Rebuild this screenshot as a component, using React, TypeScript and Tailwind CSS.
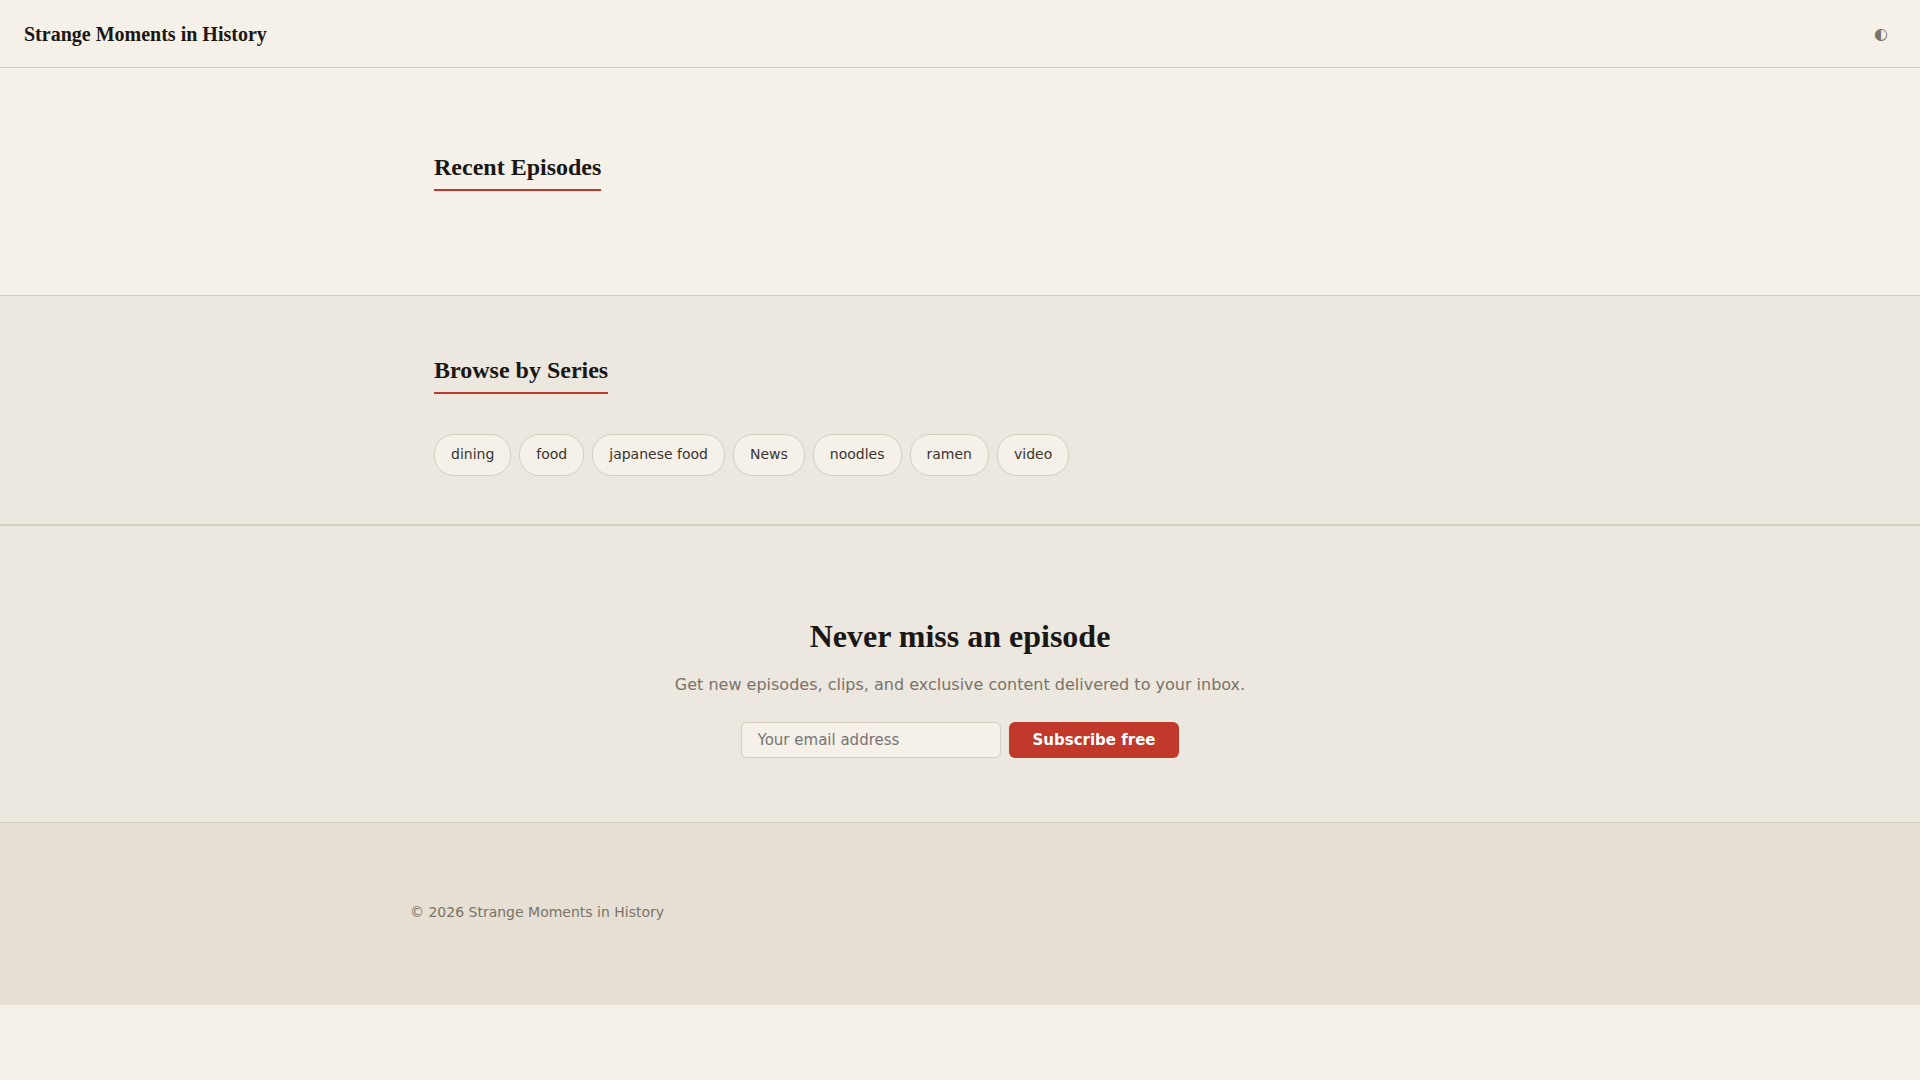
import { useState } from 'react'
import type { FormEvent, ReactNode } from 'react'

const SITE_NAME = 'Strange Moments in History'

const SERIES = ['dining', 'food', 'japanese food', 'News', 'noodles', 'ramen', 'video']

const SERIF = "font-['Liberation_Serif',serif]"

function SectionHeading({ children }: { children: ReactNode }) {
  return (
    <h2 className={`mb-10 w-fit border-b-2 border-[#c0392b] pb-1 text-2xl leading-9 font-bold ${SERIF}`}>
      {children}
    </h2>
  )
}

function Header() {
  return (
    <header className="flex h-17 items-center justify-between border-b border-[#d4cfc0] px-6">
      <a href="#" className={`text-xl font-bold ${SERIF}`}>
        {SITE_NAME}
      </a>
      <button type="button" aria-label="Toggle theme" className="px-2 py-1 text-base text-[#7a7368]">
        ◐
      </button>
    </header>
  )
}

function Newsletter() {
  const [email, setEmail] = useState('')

  const handleSubmit = (e: FormEvent) => {
    e.preventDefault()
    setEmail('')
  }

  return (
    <section className="border-t border-[#d4cfc0] bg-[#ece7df] px-6 pt-22 pb-16 text-center">
      <h2 className={`text-[32px] leading-11 font-bold ${SERIF}`}>Never miss an episode</h2>
      <p className="mt-3 leading-[30px] text-[#7a7368]">
        Get new episodes, clips, and exclusive content delivered to your inbox.
      </p>
      <form onSubmit={handleSubmit} className="mt-[22px] flex justify-center gap-2">
        <input
          type="email"
          aria-label="Your email address"
          placeholder="Your email address"
          value={email}
          onChange={(e) => setEmail(e.target.value)}
          className="h-9 w-[260px] rounded-md border border-[#d4cfc0] bg-[#f5f0e8] px-4 text-[15px] placeholder:text-[#757575]"
        />
        <button type="submit" className="h-9 rounded-md bg-[#c0392b] px-6 text-[15px] font-bold text-white">
          Subscribe free
        </button>
      </form>
    </section>
  )
}

export default function App() {
  return (
    <div className="min-h-screen bg-[#f5f0e8] font-['DejaVu_Sans',sans-serif] text-[#1a1714]">
      <Header />
      <main>
        <section className="mx-auto max-w-[1100px] px-6 pt-[81px] pb-16">
          <SectionHeading>Recent Episodes</SectionHeading>
        </section>

        <section className="border-y border-[#d4cfc0] bg-[#ece7df]">
          <div className="mx-auto max-w-[1100px] px-6 pt-14 pb-12">
            <SectionHeading>Browse by Series</SectionHeading>
            <nav aria-label="Series" className="flex flex-wrap gap-2">
              {SERIES.map((name) => (
                <a
                  key={name}
                  href="#"
                  className="rounded-[20px] border border-[#d4cfc0] bg-[#f5f0e8] px-4 pt-[7px] pb-[9px] text-sm leading-6 text-[#3a3530]"
                >
                  {name}
                </a>
              ))}
            </nav>
          </div>
        </section>

        <Newsletter />
      </main>
      <footer className="border-t border-[#d4cfc0] bg-[#e6dfd3]">
        <p className="mx-auto max-w-[1100px] pt-[77px] pb-[81px] text-sm leading-6 text-[#7a7368]">
          © 2026 {SITE_NAME}
        </p>
      </footer>
    </div>
  )
}
